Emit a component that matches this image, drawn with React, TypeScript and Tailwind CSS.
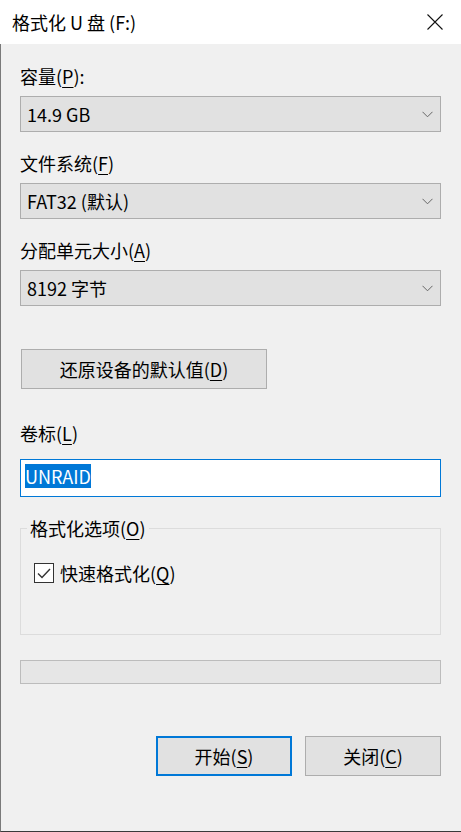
import type { ReactNode } from "react";

const FONT = { fontFamily: '"Noto Sans CJK SC", "Microsoft YaHei UI", sans-serif' };

// access key letter, underlined like a Win32 mnemonic
function Key({ children }: { children: ReactNode }) {
  return <span className="underline underline-offset-[3px] decoration-1">{children}</span>;
}

function Combo({ value }: { value: string }) {
  return (
    <div className="flex h-[36px] items-center justify-between border border-[#adadad] bg-[#e1e1e1] pl-[6px] pr-[7px]">
      <span className="leading-[24px]">{value}</span>
      <svg width="11" height="7" viewBox="0 0 11 7" fill="none">
        <polyline points="0.5,0.8 5.5,5.8 10.5,0.8" stroke="#666" strokeWidth="1" />
      </svg>
    </div>
  );
}

export default function App() {
  return (
    <div style={FONT} className="flex h-[832px] w-[461px] flex-col text-[18px] text-black">
      {/* title bar */}
      <div className="flex h-[44px] shrink-0 items-center justify-between bg-white pl-[12px] pr-[18px]">
        <span className="leading-[24px]">格式化 U 盘 (F:)</span>
        <svg width="16" height="16" viewBox="0 0 16 16" fill="none">
          <path d="M0.5 0.5 L15.5 15.5 M15.5 0.5 L0.5 15.5" stroke="#111" strokeWidth="1.1" />
        </svg>
      </div>

      <div className="flex flex-1 flex-col border-b border-l border-b-[#3a3a3a] border-l-[#7a7a7a] bg-[#f0f0f0] pl-[19px] pr-[20px] pt-[20px]">
        <div className="leading-[24px]">
          容量(<Key>P</Key>):
        </div>
        <div className="mt-[8px]">
          <Combo value="14.9 GB" />
        </div>

        <div className="mt-[19px] leading-[24px]">
          文件系统(<Key>F</Key>)
        </div>
        <div className="mt-[8px]">
          <Combo value="FAT32 (默认)" />
        </div>

        <div className="mt-[19px] leading-[24px]">
          分配单元大小(<Key>A</Key>)
        </div>
        <div className="mt-[8px]">
          <Combo value="8192 字节" />
        </div>

        <button className="mt-[43px] ml-[1px] flex h-[40px] w-[246px] items-center justify-center border border-[#adadad] bg-[#e1e1e1] leading-[24px]">
          还原设备的默认值(<Key>D</Key>)
        </button>

        <div className="mt-[32px] leading-[24px]">
          卷标(<Key>L</Key>)
        </div>
        <div className="mt-[14px] h-[38px] border border-[#0078d7] bg-white pl-[4px] pt-[3px]">
          <span className="inline-block bg-[#0078d7] leading-[24px] text-white">UNRAID</span>
        </div>

        <div className="relative mt-[31px] h-[107px] border border-[#dcdcdc]">
          <span className="absolute left-[6px] top-[-13px] bg-[#f0f0f0] px-[3px] leading-[24px]">
            格式化选项(<Key>O</Key>)
          </span>
          <div className="ml-[13px] mt-[32px] flex items-center gap-[6px]">
            <span className="flex h-[20px] w-[20px] items-center justify-center border border-[#333] bg-white">
              <svg width="14" height="11" viewBox="0 0 14 11" fill="none">
                <polyline points="1,5.5 5,9.5 13,1" stroke="#333" strokeWidth="1.4" />
              </svg>
            </span>
            <span className="leading-[24px]">
              快速格式化(<Key>Q</Key>)
            </span>
          </div>
        </div>

        <div className="mt-[25px] h-[24px] border border-[#bcbcbc] bg-[#e6e6e6]" />

        <div className="mt-[52px] flex justify-end gap-[13px]">
          <button className="flex h-[40px] w-[136px] items-center justify-center border-2 border-[#0078d7] bg-[#e1e1e1] leading-[24px]">
            开始(<Key>S</Key>)
          </button>
          <button className="flex h-[40px] w-[136px] items-center justify-center border border-[#adadad] bg-[#e1e1e1] leading-[24px]">
            关闭(<Key>C</Key>)
          </button>
        </div>
      </div>
    </div>
  );
}
